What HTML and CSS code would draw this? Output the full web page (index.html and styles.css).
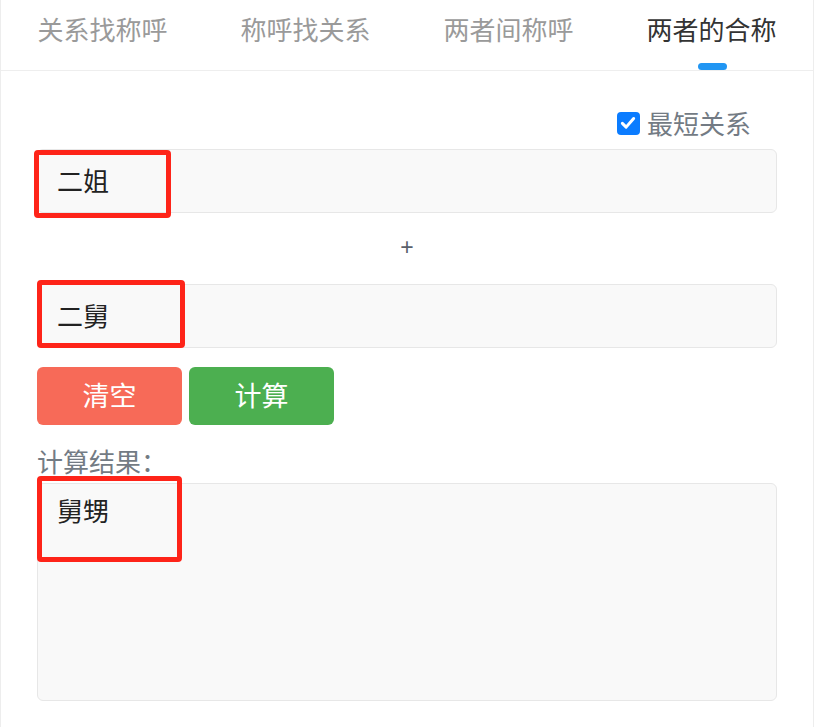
FILE: index.html
```html
<!DOCTYPE html>
<html lang="zh-CN">
<head>
<meta charset="utf-8">
<title>亲戚关系计算器</title>
<link rel="stylesheet" href="styles.css">
</head>
<body>
<div class="page">
  <nav class="tabs">
    <div class="tab">关系找称呼</div>
    <div class="tab">称呼找关系</div>
    <div class="tab">两者间称呼</div>
    <div class="tab active">两者的合称</div>
  </nav>
  <main class="content">
    <div class="opt-row">
      <label class="opt">
        <span class="check"><svg viewBox="0 0 24 24" width="18" height="18"><path d="M4.5 12.5 L9.5 17.5 L19.5 6" fill="none" stroke="#fff" stroke-width="4" stroke-linecap="round" stroke-linejoin="round"/></svg></span>
        <span class="opt-text">最短关系</span>
      </label>
    </div>
    <div class="field">
      <input class="text-input" type="text" value="二姐">
      <span class="mark mark-1"></span>
    </div>
    <div class="plus">+</div>
    <div class="field">
      <input class="text-input" type="text" value="二舅">
      <span class="mark mark-2"></span>
    </div>
    <div class="actions">
      <button class="btn btn-clear">清空</button>
      <button class="btn btn-calc">计算</button>
    </div>
    <div class="result-label">计算结果：</div>
    <div class="field">
      <div class="result">舅甥</div>
      <span class="mark mark-3"></span>
    </div>
  </main>
</div>
</body>
</html>
```
FILE: styles.css
```css
* { box-sizing: border-box; }
html, body {
  margin: 0;
  padding: 0;
  background: #fff;
}
body {
  font-family: "Noto Sans CJK SC", "Noto Sans", sans-serif;
  color: #333;
}
.page {
  width: 814px;
  min-height: 727px;
  border-left: 1px solid #ededed;
  border-right: 1px solid #ededed;
}
.tabs {
  display: grid;
  grid-template-columns: repeat(4, 1fr);
  height: 71px;
  border-bottom: 1px solid #eeeeee;
}
.tab {
  position: relative;
  text-align: center;
  font-size: 26px;
  line-height: 36px;
  padding-top: 11px;
  color: #9a9a9a;
}
.tab.active {
  color: #333;
}
.tab.active::after {
  content: "";
  position: absolute;
  left: 50%;
  bottom: 0;
  width: 29px;
  height: 7px;
  margin-left: -14px;
  border-radius: 4px;
  background: #2196f3;
}
.content {
  padding: 0 36px 0 36px;
}
.opt-row {
  display: flex;
  justify-content: flex-end;
  margin-top: 34px;
  height: 36px;
  padding-right: 26px;
}
.opt {
  display: flex;
  align-items: center;
  gap: 7px;
}
.check {
  width: 23px;
  height: 23px;
  border-radius: 4px;
  background: #0b7cff;
  display: flex;
  align-items: center;
  justify-content: center;
}
.opt-text {
  font-size: 26px;
  line-height: 36px;
  color: #737b84;
}
.field {
  position: relative;
}
.opt-row + .field {
  margin-top: 8px;
}
.text-input {
  display: block;
  width: 100%;
  height: 64px;
  margin: 0;
  padding: 0 0 3px 19px;
  border: 1px solid #e7e7e7;
  border-radius: 6px;
  background: #f9f9f9;
  font-family: inherit;
  font-size: 26px;
  color: #222;
  outline: none;
}
.plus {
  height: 71px;
  line-height: 68px;
  text-align: center;
  font-family: "Liberation Sans", sans-serif;
  font-size: 23px;
  color: #5a606a;
}
.actions {
  display: flex;
  gap: 7px;
  margin-top: 19px;
}
.btn {
  width: 145px;
  height: 58px;
  border: none;
  border-radius: 6px;
  font-family: inherit;
  font-size: 27px;
  color: #fff;
  padding: 0 0 3px 0;
}
.btn-clear { background: #f76a58; }
.btn-calc { background: #4caf50; }
.result-label {
  margin-top: 20px;
  font-size: 26px;
  line-height: 32px;
  color: #737b84;
}
.result-label + .field {
  margin-top: 6px;
}
.result {
  height: 218px;
  border: 1px solid #e7e7e7;
  border-radius: 6px;
  background: #f9f9f9;
  padding: 8px 19px;
  font-size: 26px;
  line-height: 36px;
  color: #222;
}
.mark {
  position: absolute;
  border: 5px solid #fe2419;
  border-radius: 4px;
  pointer-events: none;
}
.mark-1 { left: -3px; top: 1px; width: 137px; height: 68px; }
.mark-2 { left: 0; top: -4px; width: 148px; height: 68px; }
.mark-3 { left: 0; top: -7px; width: 145px; height: 86px; }
```
